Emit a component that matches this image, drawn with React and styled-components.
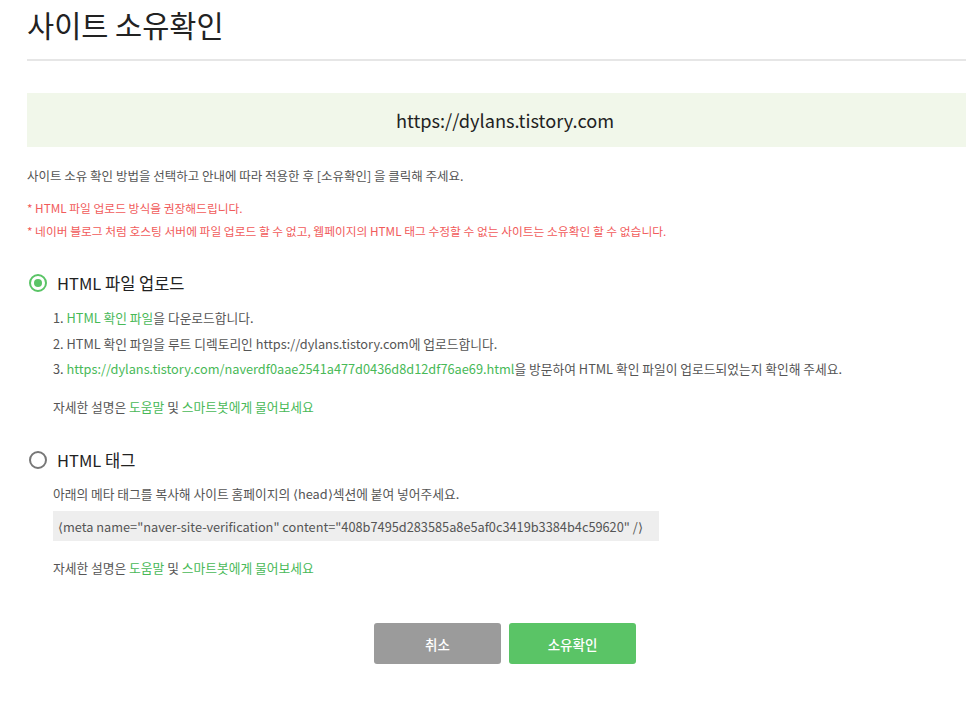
import React from 'react';
import styled, { createGlobalStyle } from 'styled-components';

const GlobalStyle = createGlobalStyle`
  html, body {
    margin: 0;
    padding: 0;
    background: #fff;
    overflow: hidden;
  }
  body {
    font-family: 'Noto Sans CJK KR', 'Noto Sans', sans-serif;
    color: #333;
  }
`;

const Page = styled.div`
  width: 956px;
  margin-left: 27px;
`;

const Title = styled.h1`
  margin: 0;
  padding-top: 2px;
  height: 57px;
  font-size: 29.5px;
  font-weight: 400;
  line-height: 44px;
  color: #222;
  border-bottom: 2px solid #e6e6e6;
`;

const Banner = styled.div`
  margin-top: 32px;
  height: 54px;
  background: #f1f7ea;
  display: flex;
  align-items: center;
  justify-content: center;
  font-size: 18.2px;
  color: #222;
`;

const Intro = styled.p`
  margin: 20px 0 0;
  font-size: 12.5px;
  line-height: 18px;
  color: #555;
`;

const Notes = styled.ul`
  list-style: none;
  margin: 14px 0 0;
  padding: 0;
  display: flex;
  flex-direction: column;
  gap: 5px;
`;

const Note = styled.li`
  font-size: 11.75px;
  line-height: 18px;
  color: #f15b5b;
`;

const Option = styled.section`
  margin-top: ${(p) => p.$top}px;
`;

const OptionHead = styled.label`
  display: flex;
  align-items: center;
  gap: 10px;
  height: 24px;
  padding-left: 2px;
  font-size: 16.5px;
  color: #222;
`;

const Radio = styled.span`
  box-sizing: border-box;
  width: 18px;
  height: 18px;
  border-radius: 50%;
  border: 2px solid ${(p) => (p.$checked ? '#5ac466' : '#777')};
  display: flex;
  align-items: center;
  justify-content: center;

  &::after {
    content: '';
    display: ${(p) => (p.$checked ? 'block' : 'none')};
    width: 8px;
    height: 8px;
    border-radius: 50%;
    background: #5ac466;
  }
`;

const Body = styled.div`
  padding-left: 26px;
  font-size: 12.75px;
  color: #555;
`;

const Steps = styled.ol`
  list-style: none;
  margin: 14px 0 0;
  padding: 0;
  display: flex;
  flex-direction: column;
  gap: 7.5px;
`;

const Step = styled.li`
  line-height: 18px;
`;

const Green = styled.a`
  color: #48b957;
  text-decoration: none;
`;

const Line = styled.p`
  margin: ${(p) => p.$top}px 0 0;
  line-height: 18px;
`;

const Code = styled.div`
  margin-top: 8px;
  width: 606px;
  box-sizing: border-box;
  height: 30px;
  padding: 0 5px;
  background: #eeeeee;
  display: flex;
  align-items: center;
  font-size: 12.75px;
  color: #555;
`;

const Actions = styled.div`
  margin-top: 46px;
  display: flex;
  justify-content: center;
  gap: 8px;
`;

const Button = styled.button`
  width: 127px;
  height: 41px;
  border: 0;
  border-radius: 3px;
  background: ${(p) => (p.$primary ? '#5ac466' : '#9b9b9b')};
  color: #fff;
  font-family: inherit;
  font-size: 13.5px;
  font-weight: 500;
  cursor: pointer;
`;

export default function App() {
  const site = 'https://dylans.tistory.com';
  const file = 'naverdf0aae2541a477d0436d8d12df76ae69.html';

  return (
    <Page>
      <GlobalStyle />
      <Title>사이트 소유확인</Title>
      <Banner>{site}</Banner>
      <Intro>사이트 소유 확인 방법을 선택하고 안내에 따라 적용한 후 [소유확인] 을 클릭해 주세요.</Intro>
      <Notes>
        <Note>* HTML 파일 업로드 방식을 권장해드립니다.</Note>
        <Note>* 네이버 블로그 처럼 호스팅 서버에 파일 업로드 할 수 없고, 웹페이지의 HTML 태그 수정할 수 없는 사이트는 소유확인 할 수 없습니다.</Note>
      </Notes>

      <Option $top={31}>
        <OptionHead>
          <Radio $checked />
          HTML 파일 업로드
        </OptionHead>
        <Body>
          <Steps>
            <Step>1. <Green href="#">HTML 확인 파일</Green>을 다운로드합니다.</Step>
            <Step>2. HTML 확인 파일을 루트 디렉토리인 {site}에 업로드합니다.</Step>
            <Step>
              3. <Green href="#">{site}/{file}</Green>을 방문하여 HTML 확인 파일이 업로드되었는지 확인해 주세요.
            </Step>
          </Steps>
          <Line $top={20}>
            자세한 설명은 <Green href="#">도움말</Green> 및 <Green href="#">스마트봇에게 물어보세요</Green>
          </Line>
        </Body>
      </Option>

      <Option $top={32}>
        <OptionHead>
          <Radio />
          HTML 태그
        </OptionHead>
        <Body>
          <Line $top={13}>아래의 메타 태그를 복사해 사이트 홈페이지의 ⟨head⟩섹션에 붙여 넣어주세요.</Line>
          <Code>
            ⟨meta name="naver-site-verification" content="408b7495d283585a8e5af0c3419b3384b4c59620" /⟩
          </Code>
          <Line $top={18}>
            자세한 설명은 <Green href="#">도움말</Green> 및 <Green href="#">스마트봇에게 물어보세요</Green>
          </Line>
        </Body>
      </Option>

      <Actions>
        <Button>취소</Button>
        <Button $primary>소유확인</Button>
      </Actions>
    </Page>
  );
}
